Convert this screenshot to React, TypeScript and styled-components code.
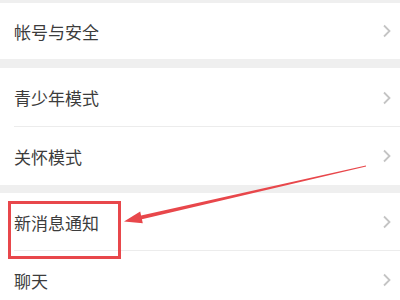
import styled, { createGlobalStyle } from "styled-components";

const GlobalStyle = createGlobalStyle`
  html, body { margin: 0; padding: 0; background: #efefef; }
  body { font-family: "Noto Sans CJK SC", "Noto Sans", sans-serif; }
`;

const Page = styled.div`
  position: relative;
  width: 400px;
  height: 300px;
  overflow: hidden;
  background: #efefef;
  padding-top: 3px;
  box-sizing: border-box;
`;

const Group = styled.div<{ $gap: number }>`
  background: #fff;
  margin-bottom: ${(p) => p.$gap}px;
`;

const Row = styled.div<{ $h: number; $divider?: boolean }>`
  height: ${(p) => p.$h}px;
  display: flex;
  align-items: center;
  justify-content: space-between;
  padding: 0 8px 0 14px;
  position: relative;
  box-sizing: border-box;
  ${(p) =>
    p.$divider &&
    `&::after {
      content: "";
      position: absolute;
      left: 14px;
      right: 0;
      bottom: 0;
      height: 1px;
      background: #ececec;
    }`}
`;

const Label = styled.span`
  font-size: 17px;
  color: #3c3c3c;
  letter-spacing: 0;
`;

const Overlay = styled.svg`
  position: absolute;
  left: 0;
  top: 0;
  pointer-events: none;
`;

function Chevron() {
  return (
    <svg width="10" height="14" viewBox="0 0 10 14">
      <path d="M2 1.5 L7.5 7 L2 12.5" fill="none" stroke="#c4c4c4" strokeWidth="1.8" />
    </svg>
  );
}

type Item = { label: string; h: number; divider?: boolean };

const groups: { items: Item[]; gap: number }[] = [
  { items: [{ label: "帐号与安全", h: 56 }], gap: 9 },
  {
    items: [
      { label: "青少年模式", h: 59, divider: true },
      { label: "关怀模式", h: 58 },
    ],
    gap: 8,
  },
  {
    items: [
      { label: "新消息通知", h: 58, divider: true },
      { label: "聊天", h: 58 },
    ],
    gap: 0,
  },
];

export default function App() {
  return (
    <>
      <GlobalStyle />
      <Page>
        {groups.map((g, i) => (
          <Group key={i} $gap={g.gap}>
            {g.items.map((it) => (
              <Row key={it.label} $h={it.h} $divider={it.divider}>
                <Label>{it.label}</Label>
                <Chevron />
              </Row>
            ))}
          </Group>
        ))}
        <Overlay width="400" height="300" viewBox="0 0 400 300">
          <rect x="9.5" y="202.5" width="110" height="55" fill="none" stroke="#e8474b" strokeWidth="3" />
          <polygon
            fill="#e8474b"
            points="124,221.5 140.2,211.6 141.1,215.5 365.9,165.6 366.1,166.4 141.9,219.3 142.8,223.3"
          />
        </Overlay>
      </Page>
    </>
  );
}
